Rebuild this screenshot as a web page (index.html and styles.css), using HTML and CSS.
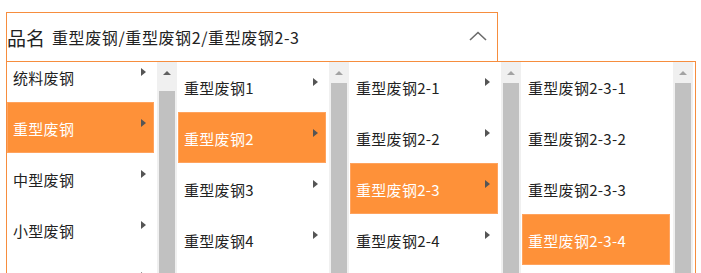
FILE: index.html
```html
<!DOCTYPE html>
<html lang="zh">
  <head>
    <meta charset="UTF-8" />
    <link rel="stylesheet" href="styles.css">
  </head>
  <body>
    <div class="wrap">
      <div class="selector">
        <span class="label">品名</span>
        <span class="path">重型废钢/重型废钢2/重型废钢2-3</span>
        <svg class="chevron" width="18" height="10" viewBox="0 0 18 10">
          <polyline points="1,9 9,1.5 17,9" fill="none" stroke="#6b6b6b" stroke-width="1.6" />
        </svg>
      </div>
      <div class="panel">
        <div class="column">
          <div class="list scrolled">
            <div class="item">统料废钢<span class="arrow"></span></div>
            <div class="item active">重型废钢<span class="arrow"></span></div>
            <div class="item">中型废钢<span class="arrow"></span></div>
            <div class="item">小型废钢<span class="arrow"></span></div>
            <div class="item"><span></span><span class="arrow"></span></div>
          </div>
          <div class="scrollbar">
            <div class="scroll-up enabled"></div>
            <div class="thumb low"></div>
          </div>
        </div>
        <div class="column">
          <div class="list">
            <div class="item">重型废钢1<span class="arrow"></span></div>
            <div class="item active">重型废钢2<span class="arrow"></span></div>
            <div class="item">重型废钢3<span class="arrow"></span></div>
            <div class="item">重型废钢4<span class="arrow"></span></div>
          </div>
          <div class="scrollbar">
            <div class="scroll-up"></div>
            <div class="thumb"></div>
          </div>
        </div>
        <div class="column">
          <div class="list">
            <div class="item">重型废钢2-1<span class="arrow"></span></div>
            <div class="item">重型废钢2-2<span class="arrow"></span></div>
            <div class="item active">重型废钢2-3<span class="arrow"></span></div>
            <div class="item">重型废钢2-4<span class="arrow"></span></div>
          </div>
          <div class="scrollbar">
            <div class="scroll-up"></div>
            <div class="thumb"></div>
          </div>
        </div>
        <div class="column">
          <div class="list">
            <div class="item">重型废钢2-3-1</div>
            <div class="item">重型废钢2-3-2</div>
            <div class="item">重型废钢2-3-3</div>
            <div class="item active">重型废钢2-3-4</div>
          </div>
          <div class="scrollbar">
            <div class="scroll-up"></div>
            <div class="thumb"></div>
          </div>
        </div>
      </div>
    </div>
  </body>
</html>
```

FILE: styles.css
```css
body {
  margin: 0;
  background-color: white;
  font-family: "Noto Sans CJK SC", "Noto Sans", sans-serif;
  color: #222;
}
.wrap {
  padding: 12px 0 0 6px;
}
.selector {
  width: 492px;
  height: 50px;
  box-sizing: border-box;
  border: 1px solid #f68d3e;
  display: flex;
  align-items: center;
  padding: 0 10px 0 0;
}
.label {
  font-size: 19px;
  margin-right: 7px;
}
.path {
  font-size: 16px;
  letter-spacing: 0.6px;
  flex: 1;
}
.chevron {
  margin-top: -2px;
}
.panel {
  width: 690px;
  height: 240px;
  box-sizing: border-box;
  margin-top: -1px;
  border: 1px solid #f68d3e;
  display: flex;
  overflow: hidden;
}
.column {
  width: 172px;
  display: flex;
}
.column:first-child {
  width: 170px;
}
.list {
  flex: 1;
  margin-top: -1px;
}
.list.scrolled {
  margin-top: -11px;
}
.item {
  height: 51px;
  box-sizing: border-box;
  margin: 0 3px 0 1px;
  padding: 16px 8px 0 6px;
  line-height: 22px;
  font-size: 15px;
  letter-spacing: 0.3px;
  display: flex;
  align-items: flex-start;
  justify-content: space-between;
}
.column:first-child .item {
  margin-left: 0;
}
.item.active {
  background-color: #fe9139;
  color: white;
  box-shadow: inset 0 0 0 1px #ffa35e;
}
.arrow {
  margin-top: 1px;
  width: 0;
  height: 0;
  border-top: 4px solid transparent;
  border-bottom: 4px solid transparent;
  border-left: 5px solid #555;
}
.scrollbar {
  width: 20px;
  background-color: #f0f0f0;
  display: flex;
  flex-direction: column;
  align-items: center;
}
.scroll-up {
  height: 21px;
  width: 100%;
  display: flex;
  align-items: center;
  justify-content: center;
}
.scroll-up:before {
  content: "";
  width: 0;
  height: 0;
  border-left: 4px solid transparent;
  border-right: 4px solid transparent;
  border-bottom: 4px solid #a3a3a3;
}
.scroll-up.enabled:before {
  border-bottom-color: #606060;
}
.thumb {
  width: 16px;
  flex: 1;
  background-color: #c1c1c1;
}
.thumb.low {
  margin-top: 8px;
}
```
